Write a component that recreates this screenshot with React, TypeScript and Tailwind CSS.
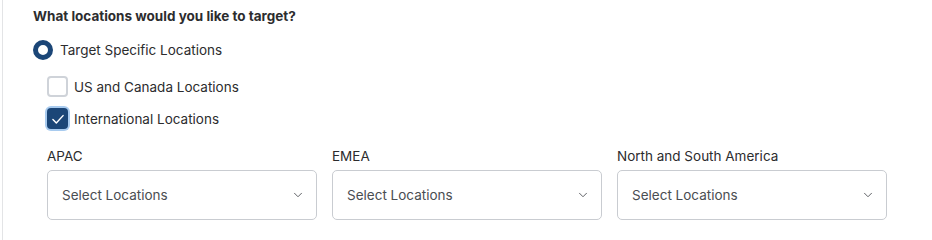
import { ChevronDown } from "lucide-react";

const regions = ["APAC", "EMEA", "North and South America"];

function Checkbox({ checked, label }: { checked: boolean; label: string }) {
  return (
    <label className="flex items-center gap-[6px]">
      {checked ? (
        <span className="flex h-[21px] w-[21px] items-center justify-center rounded-[4px] bg-[#1b4677] ring-2 ring-[#a8cbef]">
          <svg viewBox="0 0 16 16" className="h-[18px] w-[18px]" fill="none" stroke="white" strokeWidth="1.3" strokeLinecap="round" strokeLinejoin="round">
            <path d="M3.5 8.5l3 3 6-6.5" />
          </svg>
        </span>
      ) : (
        <span className="h-[21px] w-[21px] rounded-[4px] border-2 border-[#cfd3d9] bg-white" />
      )}
      <span className="text-[13.5px] text-[#2c2c2e]">{label}</span>
    </label>
  );
}

function RegionSelect({ label }: { label: string }) {
  return (
    <div className="flex flex-col">
      <span className="mb-[6px] text-[13.5px] leading-[16px] text-[#2c2c2e]">{label}</span>
      <button type="button" className="flex h-[50px] items-center justify-between rounded-[5px] border border-[#c9ccd1] bg-white pl-[14px] pr-[11px] text-left">
        <span className="text-[13.5px] text-[#4a4d52]">Select Locations</span>
        <ChevronDown className="h-[14px] w-[14px] text-[#4a4d52]" strokeWidth={1.5} />
      </button>
    </div>
  );
}

export default function App() {
  return (
    <div className="h-[240px] w-[932px] bg-white font-['Inter','Liberation_Sans',sans-serif]">
      <div className="ml-[2px] h-full border-l border-[#e3e4e6] pl-[30px] pt-[7px]">
        <h2 className="text-[13.5px] font-bold leading-[18px] text-[#2c2c2e]">What locations would you like to target?</h2>

        <label className="mt-[15px] flex items-center gap-[7px]">
          <span className="h-[20px] w-[20px] rounded-full border-[5px] border-[#1b4677] bg-white" />
          <span className="text-[13.5px] text-[#2c2c2e]">Target Specific Locations</span>
        </label>

        <div className="ml-[14px] mt-[16px] flex flex-col gap-[11px]">
          <Checkbox checked={false} label="US and Canada Locations" />
          <Checkbox checked label="International Locations" />
        </div>

        <div className="ml-[14px] mt-[19px] grid w-[840px] grid-cols-3 gap-[15px]">
          {regions.map((region) => <RegionSelect key={region} label={region} />)}
        </div>
      </div>
    </div>
  );
}
